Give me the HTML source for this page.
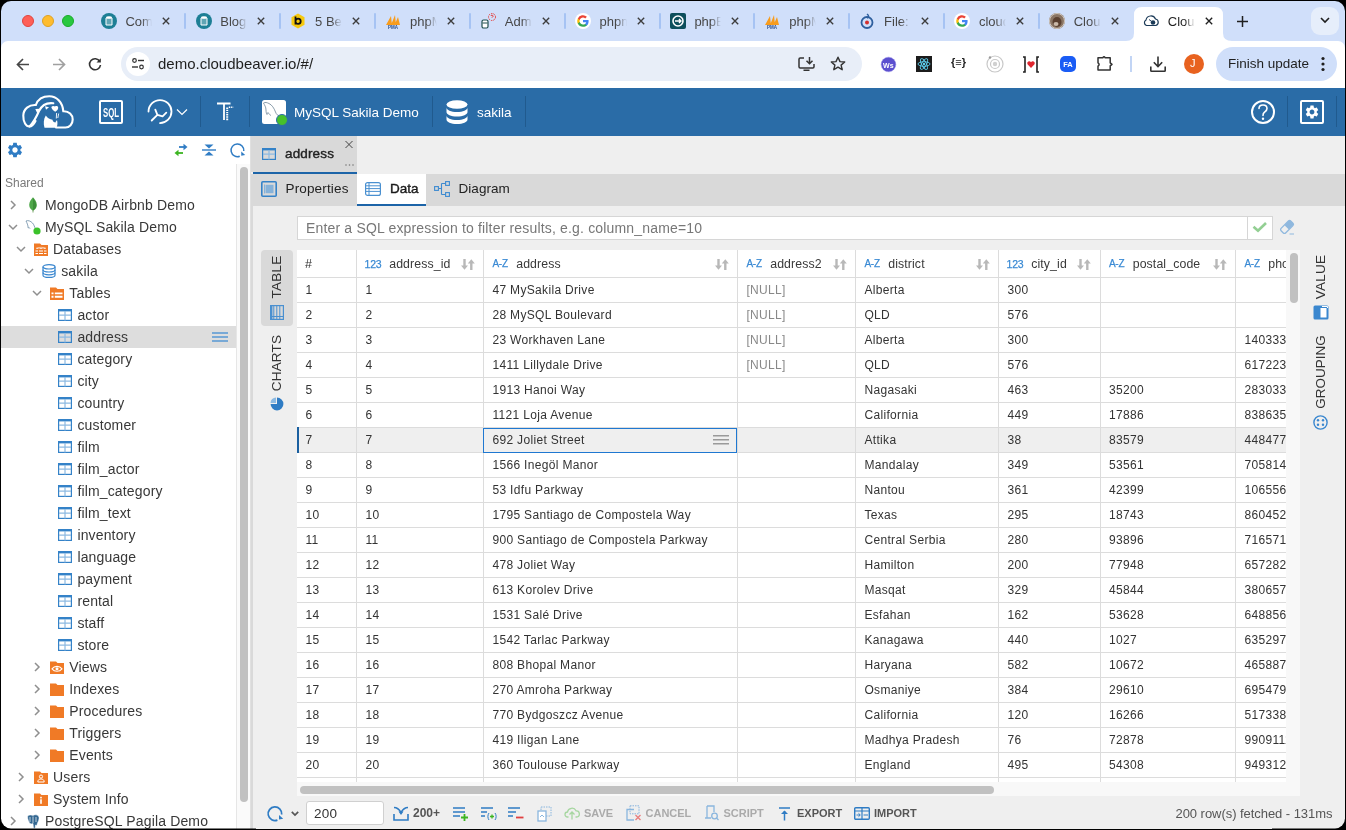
<!DOCTYPE html>
<html><head><meta charset="utf-8">
<style>
*{box-sizing:border-box;margin:0;padding:0}
html,body{width:1346px;height:830px;overflow:hidden;background:#000;font-family:"Liberation Sans",sans-serif}
#win{position:absolute;left:0;top:0;width:1346px;height:830px;overflow:hidden;background:#fff;will-change:transform;clip-path:inset(1px 1px 1.5px 1px round 10px)}
.a{position:absolute}
.t{position:absolute;white-space:nowrap;line-height:1.15}
svg.a{overflow:visible}
.tl{position:absolute;width:12px;height:12px;border-radius:50%}
.ctab{position:absolute;top:0;height:40px;width:90px}
.ctab .fav{position:absolute;left:0;top:13px;width:16px;height:16px}
.ctab .tt{position:absolute;left:24.8px;top:14px;font-size:13px;line-height:15px;color:#474747;width:27px;overflow:hidden;white-space:nowrap;-webkit-mask-image:linear-gradient(90deg,#000 62%,transparent 100%)}
.ctab .x{position:absolute;left:61.8px;top:17px;width:8px;height:8px;overflow:visible}
.csep{position:absolute;top:13px;width:2px;height:16px;background:#a6c3f3;border-radius:1px}
</style></head><body>
<div id="win">
<!-- ===== TAB STRIP ===== -->
<div class="a" style="left:0;top:0;width:1346px;height:48px;background:#d0dffa"></div>
<div class="tl" style="left:22px;top:15px;background:#fe5f57;border:0.5px solid #e0443e"></div>
<div class="tl" style="left:42px;top:15px;background:#febc2e;border:0.5px solid #dea123"></div>
<div class="tl" style="left:62px;top:15px;background:#28c840;border:0.5px solid #1aab29"></div>
<!-- tabs -->
<div class="ctab" style="left:100.7px">
 <svg class="fav" viewBox="0 0 16 16"><circle cx="8" cy="8" r="8" fill="#1d7f95"/><path d="M5 5h6v7H5z" fill="none" stroke="#fff" stroke-width="1"/><path d="M5 7h6M5 9h6M5 11h6" stroke="#fff" stroke-width=".6"/><ellipse cx="8" cy="4.5" rx="3" ry="1.3" fill="#fff"/></svg>
 <div class="tt">Compare</div><svg class="x" viewBox="0 0 10 10"><path d="M1 1L9 9M9 1L1 9" stroke="#3c3c3c" stroke-width="1.7"/></svg></div>
<div class="csep" style="left:184.4px"></div>
<div class="ctab" style="left:195.5px">
 <svg class="fav" viewBox="0 0 16 16"><circle cx="8" cy="8" r="8" fill="#1d7f95"/><path d="M5 5h6v7H5z" fill="none" stroke="#fff" stroke-width="1"/><path d="M5 7h6M5 9h6M5 11h6" stroke="#fff" stroke-width=".6"/><ellipse cx="8" cy="4.5" rx="3" ry="1.3" fill="#fff"/></svg>
 <div class="tt">Blog post</div><svg class="x" viewBox="0 0 10 10"><path d="M1 1L9 9M9 1L1 9" stroke="#3c3c3c" stroke-width="1.7"/></svg></div>
<div class="csep" style="left:279.2px"></div>
<div class="ctab" style="left:290.3px">
 <svg class="fav" viewBox="0 0 16 16"><path d="M8 0.5L14.5 4.2V11.8L8 15.5L1.5 11.8V4.2Z" fill="#f6c90e"/><path d="M5.5 3.5V11.5M5.5 8.3a2.6 2.6 0 1 0 5.2 0a2.6 2.6 0 1 0 -5.2 0" fill="none" stroke="#111" stroke-width="1.8"/></svg>
 <div class="tt">5 Best</div><svg class="x" viewBox="0 0 10 10"><path d="M1 1L9 9M9 1L1 9" stroke="#3c3c3c" stroke-width="1.7"/></svg></div>
<div class="csep" style="left:374.0px"></div>
<div class="ctab" style="left:385.2px">
 <svg class="fav" viewBox="0 0 16 16"><path d="M1 12L6 3L7 12ZM6 12L10 2L11 12ZM9.5 12L13 4L15 12Z" fill="#f89c1c"/><text x="8" y="15.5" font-size="4.5" font-weight="bold" fill="#2a4e8a" text-anchor="middle" font-family="Liberation Sans">PMA</text></svg>
 <div class="tt">phpMyAdmin</div><svg class="x" viewBox="0 0 10 10"><path d="M1 1L9 9M9 1L1 9" stroke="#3c3c3c" stroke-width="1.7"/></svg></div>
<div class="csep" style="left:468.9px"></div>
<div class="ctab" style="left:480.0px">
 <svg class="fav" viewBox="0 0 16 16"><rect x="2" y="7" width="6" height="8" rx="1.5" fill="#fff" stroke="#1f4f4f" stroke-width="1.2"/><path d="M2.5 10h5" stroke="#1f4f4f"/><circle cx="12" cy="4" r="3.5" fill="none" stroke="#e53935" stroke-width="1" stroke-dasharray="1.5 1"/><path d="M11 3a1 1 0 1 1 1.5 1l-.5.6" stroke="#e53935" fill="none" stroke-width="1"/></svg>
 <div class="tt">Admin</div><svg class="x" viewBox="0 0 10 10"><path d="M1 1L9 9M9 1L1 9" stroke="#3c3c3c" stroke-width="1.7"/></svg></div>
<div class="csep" style="left:563.7px"></div>
<div class="ctab" style="left:574.8px">
 <svg class="fav" viewBox="0 0 16 16"><circle cx="8" cy="8" r="8" fill="#fff"/><path d="M13.6 8.2c0-.4 0-.8-.1-1.2H8v2.3h3.2a2.8 2.8 0 0 1-1.2 1.8v1.5h1.9c1.1-1 1.7-2.5 1.7-4.4z" fill="#4285f4"/><path d="M8 13.8c1.6 0 2.9-.5 3.9-1.4l-1.9-1.5c-.5.4-1.2.6-2 .6-1.5 0-2.8-1-3.3-2.4H2.8v1.5A5.8 5.8 0 0 0 8 13.8z" fill="#34a853"/><path d="M4.7 9.1a3.500 3.500 0 0 1 0-2.2V5.4H2.8a5.800 5.800 0 0 0 0 5.200z" fill="#fbbc05"/><path d="M8 4.500c.9 0 1.6.3 2.200.9l1.700-1.700A5.800 5.800 0 0 0 2.800 5.400l1.900 1.500C5.200 5.500 6.500 4.500 8 4.500z" fill="#ea4335"/></svg>
 <div class="tt">phpmyadmin</div><svg class="x" viewBox="0 0 10 10"><path d="M1 1L9 9M9 1L1 9" stroke="#3c3c3c" stroke-width="1.7"/></svg></div>
<div class="csep" style="left:658.5px"></div>
<div class="ctab" style="left:669.6px">
 <svg class="fav" viewBox="0 0 16 16"><rect width="16" height="16" rx="2" fill="#0d4f5c"/><circle cx="8" cy="8" r="5" fill="none" stroke="#fff" stroke-width="1.6"/><path d="M5 8h6M9 6l2 2-2 2" stroke="#fff" stroke-width="1.4" fill="none"/></svg>
 <div class="tt">phpBB</div><svg class="x" viewBox="0 0 10 10"><path d="M1 1L9 9M9 1L1 9" stroke="#3c3c3c" stroke-width="1.7"/></svg></div>
<div class="csep" style="left:753.3px"></div>
<div class="ctab" style="left:764.4px">
 <svg class="fav" viewBox="0 0 16 16"><path d="M1 12L6 3L7 12ZM6 12L10 2L11 12ZM9.5 12L13 4L15 12Z" fill="#f89c1c"/><text x="8" y="15.5" font-size="4.5" font-weight="bold" fill="#2a4e8a" text-anchor="middle" font-family="Liberation Sans">PMA</text></svg>
 <div class="tt">phpMyAdmin</div><svg class="x" viewBox="0 0 10 10"><path d="M1 1L9 9M9 1L1 9" stroke="#3c3c3c" stroke-width="1.7"/></svg></div>
<div class="csep" style="left:848.1px"></div>
<div class="ctab" style="left:859.3px">
 <svg class="fav" viewBox="0 0 16 16"><circle cx="8" cy="9.5" r="5.5" fill="none" stroke="#2e5f9e" stroke-width="1.8"/><circle cx="8" cy="9.5" r="2" fill="#d32f2f"/><path d="M8 1c2 1.5 2 3 0 4" stroke="#2e5f9e" stroke-width="1.5" fill="none"/></svg>
 <div class="tt">File:</div><svg class="x" viewBox="0 0 10 10"><path d="M1 1L9 9M9 1L1 9" stroke="#3c3c3c" stroke-width="1.7"/></svg></div>
<div class="csep" style="left:943.0px"></div>
<div class="ctab" style="left:954.1px">
 <svg class="fav" viewBox="0 0 16 16"><circle cx="8" cy="8" r="8" fill="#fff"/><path d="M13.6 8.2c0-.4 0-.8-.1-1.2H8v2.3h3.2a2.8 2.8 0 0 1-1.2 1.8v1.5h1.9c1.1-1 1.7-2.5 1.7-4.4z" fill="#4285f4"/><path d="M8 13.8c1.6 0 2.9-.5 3.9-1.4l-1.9-1.5c-.5.4-1.2.6-2 .6-1.5 0-2.8-1-3.3-2.4H2.8v1.5A5.8 5.8 0 0 0 8 13.8z" fill="#34a853"/><path d="M4.7 9.1a3.500 3.500 0 0 1 0-2.2V5.4H2.8a5.800 5.800 0 0 0 0 5.200z" fill="#fbbc05"/><path d="M8 4.500c.9 0 1.6.3 2.200.9l1.700-1.700A5.800 5.800 0 0 0 2.800 5.400l1.900 1.500C5.200 5.500 6.500 4.500 8 4.500z" fill="#ea4335"/></svg>
 <div class="tt">cloudbeaver</div><svg class="x" viewBox="0 0 10 10"><path d="M1 1L9 9M9 1L1 9" stroke="#3c3c3c" stroke-width="1.7"/></svg></div>
<div class="csep" style="left:1037.8px"></div>
<div class="ctab" style="left:1048.9px">
 <svg class="fav" viewBox="0 0 16 16"><circle cx="8" cy="8" r="8" fill="#8a7564"/><circle cx="8" cy="8" r="7.5" fill="none" stroke="#cfc6bd" stroke-width="1"/><ellipse cx="8" cy="9" rx="4.5" ry="5" fill="#5a4030"/><ellipse cx="7" cy="11" rx="2.5" ry="2" fill="#c9b8a8"/></svg>
 <div class="tt">CloudBeaver</div><svg class="x" viewBox="0 0 10 10"><path d="M1 1L9 9M9 1L1 9" stroke="#3c3c3c" stroke-width="1.7"/></svg></div>
<!-- active tab -->
<svg class="a" style="left:1126px;top:7px" width="106" height="34" viewBox="0 0 106 34"><path d="M0 34Q8 34 8 26V8Q8 0 16 0H89Q97 0 97 8V26Q97 34 106 34Z" fill="#fff"/></svg>
<div class="ctab" style="left:1143px">
 <svg class="fav" viewBox="0 0 16 16"><path d="M3.5 12.5a3 3 0 0 1-.5-5.5a5 5 0 0 1 9.5-1a3.3 3.3 0 0 1 0 6.5z" fill="none" stroke="#1b3a57" stroke-width="1.2"/><circle cx="10" cy="9.5" r="2.3" fill="#1b3a57"/><path d="M6 6.5l2 1.5" stroke="#1b3a57"/></svg>
 <div class="tt" style="color:#1f1f1f">CloudBeaver</div><svg class="x" viewBox="0 0 10 10"><path d="M1 1L9 9M9 1L1 9" stroke="#1f1f1f" stroke-width="1.7"/></svg></div>
<svg class="a" style="left:1237px;top:16px" width="11" height="11" viewBox="0 0 11 11"><path d="M5.5 0V11M0 5.5H11" stroke="#1f1f1f" stroke-width="1.5"/></svg>
<div class="a" style="left:1311px;top:7px;width:28px;height:28px;border-radius:9px;background:#e6eefb"></div>
<svg class="a" style="left:1320px;top:17px" width="10" height="7" viewBox="0 0 10 7"><path d="M1 1L5 5L9 1" stroke="#1f1f1f" stroke-width="1.6" fill="none"/></svg>

<!-- ===== TOOLBAR ===== -->
<div class="a" style="left:1px;top:41px;width:1344px;height:47px;background:#fff;border-radius:7px 7px 0 0"></div>
<svg class="a" style="left:16px;top:58px" width="14" height="13" viewBox="0 0 14 13"><path d="M13 6.5H2M7 1L1.5 6.5L7 12" stroke="#474747" stroke-width="1.7" fill="none"/></svg>
<svg class="a" style="left:52px;top:58px" width="14" height="13" viewBox="0 0 14 13"><path d="M1 6.5H12M7 1L12.5 6.5L7 12" stroke="#a0a0a0" stroke-width="1.7" fill="none"/></svg>
<svg class="a" style="left:88px;top:57px" width="14" height="14" viewBox="0 0 14 14"><path d="M11.8 4.5A5.5 5.5 0 1 0 12.5 8" stroke="#333" stroke-width="1.6" fill="none"/><path d="M12.8 1.2V5.5H8.5Z" fill="#333"/></svg>
<div class="a" style="left:121px;top:47px;width:741px;height:34px;border-radius:17px;background:#e8eef8"></div>
<div class="a" style="left:126px;top:52px;width:24px;height:24px;border-radius:12px;background:#fff"></div>
<svg class="a" style="left:131px;top:58px" width="14" height="12" viewBox="0 0 14 12"><circle cx="3.5" cy="2.5" r="1.8" fill="none" stroke="#333" stroke-width="1.2"/><path d="M7 2.5H13" stroke="#333" stroke-width="1.4"/><circle cx="10.5" cy="9" r="1.8" fill="none" stroke="#333" stroke-width="1.2"/><path d="M1 9H7" stroke="#333" stroke-width="1.4"/></svg>
<div class="t" style="left:158px;top:55px;font-size:15px;color:#1f1f1f">demo.cloudbeaver.io/#/</div>
<svg class="a" style="left:798px;top:56px" width="17" height="16" viewBox="0 0 17 16"><path d="M6 2H2.2A1.2 1.2 0 0 0 1 3.2V10.8A1.2 1.2 0 0 0 2.2 12H14.8A1.2 1.2 0 0 0 16 10.8V8" stroke="#333" stroke-width="1.5" fill="none"/><path d="M11.5 1V7.5M8.5 4.8L11.5 7.8L14.5 4.8" stroke="#333" stroke-width="1.5" fill="none"/><path d="M5.5 13.5H11.5V15H5.5Z" fill="#333"/></svg>
<svg class="a" style="left:830px;top:56px" width="16" height="15" viewBox="0 0 16 15"><path d="M8 1.2L10 5.6L14.7 6L11.1 9.1L12.2 13.7L8 11.2L3.8 13.7L4.9 9.1L1.3 6L6 5.6Z" stroke="#333" stroke-width="1.4" fill="none" stroke-linejoin="round"/></svg>
<!-- extension icons -->
<svg class="a" style="left:881px;top:57px" width="15" height="15" viewBox="0 0 15 15"><circle cx="7.5" cy="7.5" r="7.3" fill="#5b4fcf" stroke="#8f86e6" stroke-width=".6" stroke-dasharray="1 .6"/><text x="7.3" y="10.5" font-size="7" font-weight="bold" fill="#fff" text-anchor="middle" font-family="Liberation Sans">Ws</text></svg>
<svg class="a" style="left:916px;top:56px" width="16" height="16" viewBox="0 0 16 16"><rect width="16" height="16" fill="#1c1c1c"/><g fill="none" stroke="#5ed3f3" stroke-width=".9"><ellipse cx="8" cy="8" rx="6" ry="2.3"/><ellipse cx="8" cy="8" rx="6" ry="2.3" transform="rotate(60 8 8)"/><ellipse cx="8" cy="8" rx="6" ry="2.3" transform="rotate(120 8 8)"/></g><circle cx="8" cy="8" r="1.2" fill="#5ed3f3"/></svg>
<div class="t" style="left:951px;top:56px;font-size:11px;font-weight:bold;color:#222">{≡}</div>
<svg class="a" style="left:986px;top:55px" width="18" height="18" viewBox="0 0 18 18"><circle cx="9" cy="9" r="8" fill="none" stroke="#c8c8c8" stroke-width="1.2"/><circle cx="9" cy="9" r="4.5" fill="none" stroke="#c8c8c8" stroke-width="1.2"/><circle cx="9" cy="9" r="2.2" fill="#d0d0d0"/><circle cx="4" cy="2.5" r="1.2" fill="#999"/></svg>
<svg class="a" style="left:1022px;top:56px" width="18" height="17" viewBox="0 0 18 17"><path d="M1 1H3V16H1" stroke="#222" stroke-width="1.6" fill="none"/><path d="M17 1H15V16H17" stroke="#222" stroke-width="1.6" fill="none"/><path d="M9 12L5.5 8.3a2 2 0 0 1 3.5-2a2 2 0 0 1 3.5 2Z" fill="#e0262f"/></svg>
<svg class="a" style="left:1060px;top:56px" width="16" height="16" viewBox="0 0 16 16"><rect width="16" height="16" rx="5" fill="#1a5cf5"/><text x="8" y="11" font-size="7.5" font-weight="bold" fill="#fff" text-anchor="middle" font-family="Liberation Sans">FA</text></svg>
<svg class="a" style="left:1097px;top:55px" width="17" height="16" viewBox="0 0 17 16"><path d="M1 2.8H5.8Q7 0.6 8.2 2.8H13.2V7.8L15 9.3L13.2 10.8V15H1V11.2Q3.2 9.5 1 7.8Z" stroke="#333" stroke-width="1.5" fill="none" stroke-linejoin="round"/></svg>
<div class="a" style="left:1130px;top:56px;width:1.5px;height:16px;background:#c2d5f5"></div>
<svg class="a" style="left:1150px;top:56px" width="16" height="16" viewBox="0 0 16 16"><path d="M8 0.5V10.5M3.8 6.3L8 10.5L12.2 6.3" stroke="#333" stroke-width="1.6" fill="none"/><path d="M0.8 10.5V14.5Q0.8 15.2 1.5 15.2H14.5Q15.2 15.2 15.2 14.5V10.5" stroke="#333" stroke-width="1.6" fill="none"/></svg>
<div class="a" style="left:1184px;top:54px;width:20px;height:20px;border-radius:10px;background:#e8621f"></div>
<div class="t" style="left:1190px;top:57px;font-size:11px;color:#fff">J</div>
<div class="a" style="left:1216px;top:47px;width:121px;height:34px;border-radius:17px;background:#d0dffa"></div>
<div class="t" style="left:1228px;top:56px;font-size:13.5px;color:#1f1f1f">Finish update</div>
<svg class="a" style="left:1321px;top:56px" width="4" height="16" viewBox="0 0 4 16"><circle cx="2" cy="2.5" r="1.6" fill="#1f1f1f"/><circle cx="2" cy="8" r="1.6" fill="#1f1f1f"/><circle cx="2" cy="13.5" r="1.6" fill="#1f1f1f"/></svg>
<!-- ===== APP HEADER ===== -->
<div class="a" style="left:0;top:88px;width:1346px;height:48px;background:#2a6ca7"></div>
<!-- logo -->
<svg class="a" style="left:18px;top:92px" width="60" height="40" viewBox="0 0 60 40">
 <g fill="none" stroke="#fff" stroke-width="2.1" stroke-linecap="round" stroke-linejoin="round">
  <path d="M17.8 13C11 12.5 5.5 17 5.3 23.5C5.1 30 8 34.5 11.5 34.5C14 34.5 16 32 17.5 29"/>
  <path d="M17.8 13C20 7 25.5 4.3 31.3 4.3C38.5 4.3 44.5 10 45.3 19.3C51 19 54.7 23 54.7 27.5C54.7 32 51.5 35.5 47.5 35.5H38"/>
  <path d="M11.5 34.5C15 31 18 26 21 19C24 13 28.5 10.5 35.3 11.3"/>
 </g>
 <path d="M26.5 35.7C25.3 32 25.5 27 27.8 23.6C29.5 26 32 27.5 34.5 27.8C34.8 29.5 36 30.5 37.5 30.5C38 29 38.5 28.5 39 28C39.8 31 39.5 33.5 38.5 35.7Z" fill="#fff"/>
 <path d="M27 14.2L31 15.2L28 17.8Z" fill="#fff"/>
 <path d="M33.3 15C34.5 13.5 36.5 14.3 37 14.5C38 13.8 40.3 13.8 40.2 16C40 18 38 19.5 37.2 19.8C36 19 33.5 17.3 33.3 15Z" fill="#fff"/>
 <path d="M17.3 17L22 16.8L19.8 22.5Z" fill="#fff"/>
 <path d="M38.6 21L38.3 26.5M40.7 21.5L39.8 26" fill="none" stroke="#fff" stroke-width=".9"/>
</svg>
<!-- SQL -->
<div class="a" style="left:99px;top:100px;width:24px;height:24px;border:2px solid #fff;border-radius:2px"></div>
<div class="t" style="left:96px;top:104.5px;width:30px;text-align:center;font-size:13px;font-weight:bold;color:#fff;transform:scaleX(0.6);letter-spacing:0px;line-height:15px">SQL</div>
<div class="a" style="left:135px;top:96px;width:1px;height:31px;background:#205a8e"></div>
<!-- tools -->
<svg class="a" style="left:146px;top:98px" width="28" height="28" viewBox="0 0 28 28">
 <path d="M2.5 13.6A11.5 11.5 0 1 1 14 25.1" fill="none" stroke="#fff" stroke-width="1.8" stroke-linecap="round"/>
 <path d="M5.7 22.5L11.4 16.8M11.4 16.8L9.3 11.6M11.4 16.8L16.6 18.3L20.3 14.7" fill="none" stroke="#fff" stroke-width="1.8" stroke-linecap="round" stroke-linejoin="round"/>
</svg>
<svg class="a" style="left:176px;top:108px" width="12" height="8" viewBox="0 0 12 8"><path d="M1 1.5L6 6.5L11 1.5" fill="none" stroke="#fff" stroke-width="1.2"/></svg>
<div class="a" style="left:200px;top:96px;width:1px;height:31px;background:#205a8e"></div>
<!-- T -->
<svg class="a" style="left:216px;top:102px" width="18" height="20" viewBox="0 0 18 20">
 <path d="M1 1.5H14.5M8 1.5V18" stroke="#fff" stroke-width="1.8"/>
 <path d="M11.2 5.5V19" stroke="#fff" stroke-width="2" stroke-dasharray="1.4 0.8"/>
 <path d="M12.8 5.2H17.2" stroke="#fff" stroke-width="1.6" stroke-dasharray="1.2 0.7"/>
</svg>
<div class="a" style="left:249px;top:96px;width:1px;height:31px;background:#205a8e"></div>
<!-- connection -->
<div class="a" style="left:262px;top:100px;width:24px;height:24px;border-radius:2.5px;background:#fff"></div>
<svg class="a" style="left:262px;top:100px" width="24" height="24" viewBox="0 0 24 24">
 <path d="M1.5 3C3 2 5 2.5 7 3.5C10 5 12 8 13.5 12C14.5 14.5 15.5 15.5 17 15.5" fill="none" stroke="#6f8597" stroke-width=".8"/>
 <path d="M1.5 3C2.5 5 4 7 4 10C4 12 4.5 14 5 14.5C5.5 13.5 6 13 6 12.5C7 14 8 15 9 15.5" fill="none" stroke="#6f8597" stroke-width=".8"/>
</svg>
<div class="a" style="left:276px;top:114px;width:12px;height:12px;border-radius:50%;background:#46c12a;border:1.6px solid #2a6ca7"></div>
<div class="t" style="left:294px;top:104px;font-size:13.5px;color:#fff;line-height:17px">MySQL Sakila Demo</div>
<div class="a" style="left:432px;top:96px;width:1px;height:31px;background:#205a8e"></div>
<svg class="a" style="left:446px;top:100px" width="22" height="24" viewBox="0 0 22 24">
 <ellipse cx="11" cy="4.5" rx="10.5" ry="4.3" fill="#fff"/>
 <path d="M0.5 7.5C0.5 10 5 12 11 12C17 12 21.5 10 21.5 7.5V12C21.5 14.5 17 16.5 11 16.5C5 16.5 0.5 14.5 0.5 12Z" fill="#fff"/>
 <path d="M0.5 15.5C0.5 18 5 20 11 20C17 20 21.5 18 21.5 15.5V19.5C21.5 22 17 24 11 24C5 24 0.5 22 0.5 19.5Z" fill="#fff"/>
</svg>
<div class="t" style="left:477px;top:104px;font-size:13.5px;color:#fff;line-height:17px">sakila</div>
<div class="a" style="left:525px;top:96px;width:1px;height:31px;background:#205a8e"></div>
<!-- right -->
<div class="a" style="left:1251px;top:100px;width:24px;height:24px;border-radius:50%;border:2px solid #fff"></div>
<svg class="a" style="left:1257px;top:104px" width="12" height="17" viewBox="0 0 12 17"><path d="M2 4.5C2 2.3 3.8 1 6 1C8.2 1 10 2.4 10 4.5C10 6.5 8.5 7.3 7.3 8.3C6.3 9.1 6 10 6 11.5" fill="none" stroke="#fff" stroke-width="1.6" stroke-linecap="round"/><circle cx="6" cy="14.8" r="1.2" fill="#fff"/></svg>
<div class="a" style="left:1287px;top:96px;width:1px;height:31px;background:#205a8e"></div>
<div class="a" style="left:1300px;top:100px;width:24px;height:24px;border:2px solid #fff;border-radius:2px"></div>
<svg class="a" style="left:1304px;top:104px" width="16" height="16" viewBox="0 0 24 24"><path fill="#fff" d="M19.14 12.94c.04-.3.06-.61.06-.94 0-.32-.02-.64-.07-.94l2.03-1.58c.18-.14.23-.41.12-.61l-1.92-3.32c-.12-.22-.37-.29-.59-.22l-2.39.96c-.5-.38-1.03-.7-1.62-.94l-.36-2.54c-.04-.24-.24-.41-.48-.41h-3.84c-.24 0-.43.17-.47.41l-.36 2.54c-.59.24-1.13.57-1.62.94l-2.39-.96c-.22-.08-.47 0-.59.22L2.74 8.87c-.12.21-.08.47.12.61l2.03 1.58c-.05.3-.09.63-.09.94s.02.64.07.94l-2.03 1.58c-.18.14-.23.41-.12.61l1.92 3.32c.12.22.37.29.59.22l2.39-.96c.5.38 1.03.7 1.62.94l.36 2.54c.05.24.24.41.48.41h3.84c.24 0 .44-.17.47-.41l.36-2.54c.59-.24 1.13-.56 1.62-.94l2.39.96c.22.08.47 0 .59-.22l1.92-3.32c.12-.22.07-.47-.12-.61l-2.01-1.58zM12 15.6c-1.98 0-3.6-1.62-3.6-3.6s1.62-3.6 3.6-3.6 3.6 1.62 3.6 3.6-1.62 3.6-3.6 3.6z"/></svg>
<div class="a" style="left:1336px;top:96px;width:1px;height:31px;background:#205a8e"></div>
<!-- ===== SIDEBAR ===== -->
<div class="a" style="left:0;top:136px;width:251px;height:694px;background:#fff"></div>
<svg class="a" style="left:6px;top:141px" width="18" height="18" viewBox="0 0 24 24"><path fill="#2f7cc4" d="M19.14 12.94c.04-.3.06-.61.06-.94 0-.32-.02-.64-.07-.94l2.03-1.58c.18-.14.23-.41.12-.61l-1.92-3.32c-.12-.22-.37-.29-.59-.22l-2.39.96c-.5-.38-1.03-.7-1.62-.94l-.36-2.54c-.04-.24-.24-.41-.48-.41h-3.840c-.24 0-.43.17-.47.41l-.36 2.54c-.59.24-1.13.57-1.62.94l-2.39-.96c-.22-.08-.47 0-.59.22L2.74 8.870c-.12.21-.08.47.12.61l2.03 1.58c-.05.3-.09.63-.09.94s.02.64.07.94l-2.03 1.58c-.18.14-.23.41-.12.61l1.92 3.32c.12.22.37.29.59.22l2.39-.96c.5.38 1.03.7 1.62.94l.36 2.54c.05.24.24.41.48.41h3.84c.24 0 .44-.17.47-.41l.36-2.54c.59-.24 1.13-.56 1.62-.94l2.39.96c.22.08.47 0 .59-.22l1.92-3.32c.12-.22.07-.47-.12-.61l-2.010-1.58zM12 15.600c-1.98 0-3.6-1.62-3.6-3.6s1.62-3.6 3.6-3.6 3.6 1.62 3.6 3.6-1.62 3.6-3.6 3.6z"/></svg>
<svg class="a" style="left:174px;top:143px" width="14" height="14" viewBox="0 0 14 14"><path d="M5 4H10.5" stroke="#2f7cc4" stroke-width="1.8"/><path d="M9.5 0.8L13.5 4L9.5 7.2Z" fill="#2f7cc4"/><path d="M9 10H3.5" stroke="#3cb521" stroke-width="1.8"/><path d="M4.5 6.8L0.5 10L4.5 13.2Z" fill="#3cb521"/></svg>
<svg class="a" style="left:202px;top:144px" width="14" height="12" viewBox="0 0 14 12"><path d="M2.5 0.5H11.5L7 4.5Z" fill="#2f7cc4"/><path d="M0 6H14" stroke="#2f7cc4" stroke-width="1.4"/><path d="M2.5 11.5H11.5L7 7.5Z" fill="#2f7cc4"/></svg>
<svg class="a" style="left:230px;top:143px" width="15" height="15" viewBox="0 0 16 16"><path d="M10.4 14.1A6.8 6.8 0 1 1 14.7 8.5" fill="none" stroke="#2f7cc4" stroke-width="1.6"/><path d="M12 9V13.6L16.2 12.8Z" fill="#2f7cc4"/></svg>
<div class="t" style="left:5px;top:176px;font-size:12px;line-height:14px;color:#7a7a7a">Shared</div>
<div class="a" style="left:1px;top:326px;width:235px;height:22px;background:#dddddd"></div>
<svg class="a" style="left:9.5px;top:200px" width="6" height="10" viewBox="0 0 6 10"><path d="M1 1L5 5L1 9" fill="none" stroke="#8f8f8f" stroke-width="1.5"/></svg>
<svg class="a" style="left:28.0px;top:197.0px" width="10" height="16" viewBox="0 0 10 16"><path d="M5 0.3C7 2.5 8.8 5 8.8 8C8.8 10.8 7 12.5 5 13.8C3 12.5 1.2 10.8 1.2 8C1.2 5 3 2.5 5 0.3Z" fill="#4fa84a"/><path d="M5 1C6.5 3.5 8.3 5.5 8.3 8.2C8.3 10.8 6.8 12.3 5 13.6Z" fill="#3d8f3a"/><path d="M5 13V15.5" stroke="#6b9c5a" stroke-width=".9"/></svg>
<div class="t" style="left:45.0px;top:194px;font-size:14px;line-height:22px;color:#383838;letter-spacing:0.15px">MongoDB Airbnb Demo</div>
<svg class="a" style="left:7.5px;top:224px" width="10" height="6" viewBox="0 0 10 6"><path d="M1 1L5 5L9 1" fill="none" stroke="#8f8f8f" stroke-width="1.5"/></svg>
<svg class="a" style="left:25.0px;top:219.0px" width="16" height="16" viewBox="0 0 16 16"><path d="M1 2C3 1 5.5 2 7.5 4C9 5.5 9.5 8 10.5 10" fill="none" stroke="#6a8aa5" stroke-width=".8"/><path d="M1 2C2 4 3 6 3.2 9C4 8.5 4.5 8.5 5 9.5" fill="none" stroke="#6a8aa5" stroke-width=".8"/><circle cx="12" cy="12" r="3.6" fill="#3bc22a"/></svg>
<div class="t" style="left:45.0px;top:216px;font-size:14px;line-height:22px;color:#383838;letter-spacing:0.15px">MySQL Sakila Demo</div>
<svg class="a" style="left:15.7px;top:246px" width="10" height="6" viewBox="0 0 10 6"><path d="M1 1L5 5L9 1" fill="none" stroke="#8f8f8f" stroke-width="1.5"/></svg>
<svg class="a" style="left:34.0px;top:242.5px" width="14" height="13" viewBox="0 0 14 13"><path d="M0 0.5H6L7.5 2H14V13H0Z" fill="#f07a26"/><path d="M2.5 5.5H4.5M5.5 5.5H8.5M9.5 5.5H11.5" stroke="#fff" stroke-width="1" opacity=".75"/><path d="M1.5 8H4M5 8H9M10 8H12.5M1.5 10.5H4M5 10.5H9M10 10.5H12.5" stroke="#fff" stroke-width="1.2"/><path d="M2 5.3C4 4 10 4 12 5.3" fill="none" stroke="#fff" stroke-width=".8" opacity=".7"/></svg>
<div class="t" style="left:53.1px;top:238px;font-size:14px;line-height:22px;color:#383838;letter-spacing:0.15px">Databases</div>
<svg class="a" style="left:23.9px;top:268px" width="10" height="6" viewBox="0 0 10 6"><path d="M1 1L5 5L9 1" fill="none" stroke="#8f8f8f" stroke-width="1.5"/></svg>
<svg class="a" style="left:42.0px;top:264.0px" width="14" height="14" viewBox="0 0 14 14"><g fill="none" stroke="#3a87cf" stroke-width="1.2"><ellipse cx="7" cy="2.8" rx="6" ry="2.2"/><path d="M1 2.8V11.2C1 12.4 3.7 13.4 7 13.4C10.3 13.4 13 12.4 13 11.2V2.8"/><path d="M1 5.8C1 7 3.7 8 7 8C10.3 8 13 7 13 5.8M1 8.6C1 9.8 3.7 10.8 7 10.8C10.3 10.8 13 9.8 13 8.6"/></g></svg>
<div class="t" style="left:61.2px;top:260px;font-size:14px;line-height:22px;color:#383838;letter-spacing:0.15px">sakila</div>
<svg class="a" style="left:32.1px;top:290px" width="10" height="6" viewBox="0 0 10 6"><path d="M1 1L5 5L9 1" fill="none" stroke="#8f8f8f" stroke-width="1.5"/></svg>
<svg class="a" style="left:50.0px;top:286.5px" width="14" height="13" viewBox="0 0 14 13"><path d="M0 0.5H6L7.5 2H14V13H0Z" fill="#f07a26"/><path d="M1.5 5.5H3.5V7.3H1.5ZM4.8 5.5H12.5V7.3H4.8ZM1.5 8.8H3.5V10.8H1.5ZM4.8 8.8H12.5V10.8H4.8Z" fill="#fff"/></svg>
<div class="t" style="left:69.3px;top:282px;font-size:14px;line-height:22px;color:#383838;letter-spacing:0.15px">Tables</div>
<svg class="a" style="left:58.0px;top:309.0px" width="14" height="12" viewBox="0 0 14 12"><rect x="0.6" y="0.6" width="12.8" height="10.8" fill="none" stroke="#3482c8" stroke-width="1.2"/><rect x="0" y="0" width="14" height="2.4" fill="#3482c8"/><path d="M1 6.2H13M7 2V11.5" stroke="#8dbae2" stroke-width="1.2"/></svg>
<div class="t" style="left:77.4px;top:304px;font-size:14px;line-height:22px;color:#383838;letter-spacing:0.15px">actor</div>
<svg class="a" style="left:58.0px;top:331.0px" width="14" height="12" viewBox="0 0 14 12"><rect x="0.6" y="0.6" width="12.8" height="10.8" fill="none" stroke="#3482c8" stroke-width="1.2"/><rect x="0" y="0" width="14" height="2.4" fill="#3482c8"/><path d="M1 6.2H13M7 2V11.5" stroke="#8dbae2" stroke-width="1.2"/></svg>
<div class="t" style="left:77.4px;top:326px;font-size:14px;line-height:22px;color:#383838;letter-spacing:0.15px">address</div>
<svg class="a" style="left:58.0px;top:353.0px" width="14" height="12" viewBox="0 0 14 12"><rect x="0.6" y="0.6" width="12.8" height="10.8" fill="none" stroke="#3482c8" stroke-width="1.2"/><rect x="0" y="0" width="14" height="2.4" fill="#3482c8"/><path d="M1 6.2H13M7 2V11.5" stroke="#8dbae2" stroke-width="1.2"/></svg>
<div class="t" style="left:77.4px;top:348px;font-size:14px;line-height:22px;color:#383838;letter-spacing:0.15px">category</div>
<svg class="a" style="left:58.0px;top:375.0px" width="14" height="12" viewBox="0 0 14 12"><rect x="0.6" y="0.6" width="12.8" height="10.8" fill="none" stroke="#3482c8" stroke-width="1.2"/><rect x="0" y="0" width="14" height="2.4" fill="#3482c8"/><path d="M1 6.2H13M7 2V11.5" stroke="#8dbae2" stroke-width="1.2"/></svg>
<div class="t" style="left:77.4px;top:370px;font-size:14px;line-height:22px;color:#383838;letter-spacing:0.15px">city</div>
<svg class="a" style="left:58.0px;top:397.0px" width="14" height="12" viewBox="0 0 14 12"><rect x="0.6" y="0.6" width="12.8" height="10.8" fill="none" stroke="#3482c8" stroke-width="1.2"/><rect x="0" y="0" width="14" height="2.4" fill="#3482c8"/><path d="M1 6.2H13M7 2V11.5" stroke="#8dbae2" stroke-width="1.2"/></svg>
<div class="t" style="left:77.4px;top:392px;font-size:14px;line-height:22px;color:#383838;letter-spacing:0.15px">country</div>
<svg class="a" style="left:58.0px;top:419.0px" width="14" height="12" viewBox="0 0 14 12"><rect x="0.6" y="0.6" width="12.8" height="10.8" fill="none" stroke="#3482c8" stroke-width="1.2"/><rect x="0" y="0" width="14" height="2.4" fill="#3482c8"/><path d="M1 6.2H13M7 2V11.5" stroke="#8dbae2" stroke-width="1.2"/></svg>
<div class="t" style="left:77.4px;top:414px;font-size:14px;line-height:22px;color:#383838;letter-spacing:0.15px">customer</div>
<svg class="a" style="left:58.0px;top:441.0px" width="14" height="12" viewBox="0 0 14 12"><rect x="0.6" y="0.6" width="12.8" height="10.8" fill="none" stroke="#3482c8" stroke-width="1.2"/><rect x="0" y="0" width="14" height="2.4" fill="#3482c8"/><path d="M1 6.2H13M7 2V11.5" stroke="#8dbae2" stroke-width="1.2"/></svg>
<div class="t" style="left:77.4px;top:436px;font-size:14px;line-height:22px;color:#383838;letter-spacing:0.15px">film</div>
<svg class="a" style="left:58.0px;top:463.0px" width="14" height="12" viewBox="0 0 14 12"><rect x="0.6" y="0.6" width="12.8" height="10.8" fill="none" stroke="#3482c8" stroke-width="1.2"/><rect x="0" y="0" width="14" height="2.4" fill="#3482c8"/><path d="M1 6.2H13M7 2V11.5" stroke="#8dbae2" stroke-width="1.2"/></svg>
<div class="t" style="left:77.4px;top:458px;font-size:14px;line-height:22px;color:#383838;letter-spacing:0.15px">film_actor</div>
<svg class="a" style="left:58.0px;top:485.0px" width="14" height="12" viewBox="0 0 14 12"><rect x="0.6" y="0.6" width="12.8" height="10.8" fill="none" stroke="#3482c8" stroke-width="1.2"/><rect x="0" y="0" width="14" height="2.4" fill="#3482c8"/><path d="M1 6.2H13M7 2V11.5" stroke="#8dbae2" stroke-width="1.2"/></svg>
<div class="t" style="left:77.4px;top:480px;font-size:14px;line-height:22px;color:#383838;letter-spacing:0.15px">film_category</div>
<svg class="a" style="left:58.0px;top:507.0px" width="14" height="12" viewBox="0 0 14 12"><rect x="0.6" y="0.6" width="12.8" height="10.8" fill="none" stroke="#3482c8" stroke-width="1.2"/><rect x="0" y="0" width="14" height="2.4" fill="#3482c8"/><path d="M1 6.2H13M7 2V11.5" stroke="#8dbae2" stroke-width="1.2"/></svg>
<div class="t" style="left:77.4px;top:502px;font-size:14px;line-height:22px;color:#383838;letter-spacing:0.15px">film_text</div>
<svg class="a" style="left:58.0px;top:529.0px" width="14" height="12" viewBox="0 0 14 12"><rect x="0.6" y="0.6" width="12.8" height="10.8" fill="none" stroke="#3482c8" stroke-width="1.2"/><rect x="0" y="0" width="14" height="2.4" fill="#3482c8"/><path d="M1 6.2H13M7 2V11.5" stroke="#8dbae2" stroke-width="1.2"/></svg>
<div class="t" style="left:77.4px;top:524px;font-size:14px;line-height:22px;color:#383838;letter-spacing:0.15px">inventory</div>
<svg class="a" style="left:58.0px;top:551.0px" width="14" height="12" viewBox="0 0 14 12"><rect x="0.6" y="0.6" width="12.8" height="10.8" fill="none" stroke="#3482c8" stroke-width="1.2"/><rect x="0" y="0" width="14" height="2.4" fill="#3482c8"/><path d="M1 6.2H13M7 2V11.5" stroke="#8dbae2" stroke-width="1.2"/></svg>
<div class="t" style="left:77.4px;top:546px;font-size:14px;line-height:22px;color:#383838;letter-spacing:0.15px">language</div>
<svg class="a" style="left:58.0px;top:573.0px" width="14" height="12" viewBox="0 0 14 12"><rect x="0.6" y="0.6" width="12.8" height="10.8" fill="none" stroke="#3482c8" stroke-width="1.2"/><rect x="0" y="0" width="14" height="2.4" fill="#3482c8"/><path d="M1 6.2H13M7 2V11.5" stroke="#8dbae2" stroke-width="1.2"/></svg>
<div class="t" style="left:77.4px;top:568px;font-size:14px;line-height:22px;color:#383838;letter-spacing:0.15px">payment</div>
<svg class="a" style="left:58.0px;top:595.0px" width="14" height="12" viewBox="0 0 14 12"><rect x="0.6" y="0.6" width="12.8" height="10.8" fill="none" stroke="#3482c8" stroke-width="1.2"/><rect x="0" y="0" width="14" height="2.4" fill="#3482c8"/><path d="M1 6.2H13M7 2V11.5" stroke="#8dbae2" stroke-width="1.2"/></svg>
<div class="t" style="left:77.4px;top:590px;font-size:14px;line-height:22px;color:#383838;letter-spacing:0.15px">rental</div>
<svg class="a" style="left:58.0px;top:617.0px" width="14" height="12" viewBox="0 0 14 12"><rect x="0.6" y="0.6" width="12.8" height="10.8" fill="none" stroke="#3482c8" stroke-width="1.2"/><rect x="0" y="0" width="14" height="2.4" fill="#3482c8"/><path d="M1 6.2H13M7 2V11.5" stroke="#8dbae2" stroke-width="1.2"/></svg>
<div class="t" style="left:77.4px;top:612px;font-size:14px;line-height:22px;color:#383838;letter-spacing:0.15px">staff</div>
<svg class="a" style="left:58.0px;top:639.0px" width="14" height="12" viewBox="0 0 14 12"><rect x="0.6" y="0.6" width="12.8" height="10.8" fill="none" stroke="#3482c8" stroke-width="1.2"/><rect x="0" y="0" width="14" height="2.4" fill="#3482c8"/><path d="M1 6.2H13M7 2V11.5" stroke="#8dbae2" stroke-width="1.2"/></svg>
<div class="t" style="left:77.4px;top:634px;font-size:14px;line-height:22px;color:#383838;letter-spacing:0.15px">store</div>
<svg class="a" style="left:34.1px;top:662px" width="6" height="10" viewBox="0 0 6 10"><path d="M1 1L5 5L1 9" fill="none" stroke="#8f8f8f" stroke-width="1.5"/></svg>
<svg class="a" style="left:50.0px;top:660.5px" width="14" height="13" viewBox="0 0 14 13"><path d="M0 0.5H6L7.5 2H14V13H0Z" fill="#f07a26"/><path d="M2 7.8C4.5 4.5 9.5 4.5 12 7.8C9.5 11 4.5 11 2 7.8Z" fill="none" stroke="#fff" stroke-width="1.1"/><circle cx="7" cy="7.8" r="1.5" fill="#fff"/></svg>
<div class="t" style="left:69.3px;top:656px;font-size:14px;line-height:22px;color:#383838;letter-spacing:0.15px">Views</div>
<svg class="a" style="left:34.1px;top:684px" width="6" height="10" viewBox="0 0 6 10"><path d="M1 1L5 5L1 9" fill="none" stroke="#8f8f8f" stroke-width="1.5"/></svg>
<svg class="a" style="left:50.0px;top:682.5px" width="14" height="13" viewBox="0 0 14 13"><path d="M0 0.5H6L7.5 2H14V13H0Z" fill="#f07a26"/></svg>
<div class="t" style="left:69.3px;top:678px;font-size:14px;line-height:22px;color:#383838;letter-spacing:0.15px">Indexes</div>
<svg class="a" style="left:34.1px;top:706px" width="6" height="10" viewBox="0 0 6 10"><path d="M1 1L5 5L1 9" fill="none" stroke="#8f8f8f" stroke-width="1.5"/></svg>
<svg class="a" style="left:50.0px;top:704.5px" width="14" height="13" viewBox="0 0 14 13"><path d="M0 0.5H6L7.5 2H14V13H0Z" fill="#f07a26"/></svg>
<div class="t" style="left:69.3px;top:700px;font-size:14px;line-height:22px;color:#383838;letter-spacing:0.15px">Procedures</div>
<svg class="a" style="left:34.1px;top:728px" width="6" height="10" viewBox="0 0 6 10"><path d="M1 1L5 5L1 9" fill="none" stroke="#8f8f8f" stroke-width="1.5"/></svg>
<svg class="a" style="left:50.0px;top:726.5px" width="14" height="13" viewBox="0 0 14 13"><path d="M0 0.5H6L7.5 2H14V13H0Z" fill="#f07a26"/></svg>
<div class="t" style="left:69.3px;top:722px;font-size:14px;line-height:22px;color:#383838;letter-spacing:0.15px">Triggers</div>
<svg class="a" style="left:34.1px;top:750px" width="6" height="10" viewBox="0 0 6 10"><path d="M1 1L5 5L1 9" fill="none" stroke="#8f8f8f" stroke-width="1.5"/></svg>
<svg class="a" style="left:50.0px;top:748.5px" width="14" height="13" viewBox="0 0 14 13"><path d="M0 0.5H6L7.5 2H14V13H0Z" fill="#f07a26"/></svg>
<div class="t" style="left:69.3px;top:744px;font-size:14px;line-height:22px;color:#383838;letter-spacing:0.15px">Events</div>
<svg class="a" style="left:17.7px;top:772px" width="6" height="10" viewBox="0 0 6 10"><path d="M1 1L5 5L1 9" fill="none" stroke="#8f8f8f" stroke-width="1.5"/></svg>
<svg class="a" style="left:34.0px;top:770.5px" width="14" height="13" viewBox="0 0 14 13"><path d="M0 0.5H6L7.5 2H14V13H0Z" fill="#f07a26"/><circle cx="7" cy="5.6" r="1.6" fill="none" stroke="#fff" stroke-width="1"/><path d="M3.8 11C3.8 8.8 5.2 8 7 8C8.8 8 10.2 8.8 10.2 11Z" fill="none" stroke="#fff" stroke-width="1"/></svg>
<div class="t" style="left:53.1px;top:766px;font-size:14px;line-height:22px;color:#383838;letter-spacing:0.15px">Users</div>
<svg class="a" style="left:17.7px;top:794px" width="6" height="10" viewBox="0 0 6 10"><path d="M1 1L5 5L1 9" fill="none" stroke="#8f8f8f" stroke-width="1.5"/></svg>
<svg class="a" style="left:34.0px;top:792.5px" width="14" height="13" viewBox="0 0 14 13"><path d="M0 0.5H6L7.5 2H14V13H0Z" fill="#f07a26"/><rect x="6.2" y="3.8" width="1.6" height="1.6" fill="#fff"/><rect x="6.2" y="6.3" width="1.6" height="4.5" fill="#fff"/></svg>
<div class="t" style="left:53.1px;top:788px;font-size:14px;line-height:22px;color:#383838;letter-spacing:0.15px">System Info</div>
<svg class="a" style="left:9.5px;top:816px" width="6" height="10" viewBox="0 0 6 10"><path d="M1 1L5 5L1 9" fill="none" stroke="#8f8f8f" stroke-width="1.5"/></svg>
<svg class="a" style="left:26.0px;top:813.5px" width="14" height="15" viewBox="0 0 14 15"><path d="M2 1.5C4 0.5 6 1 7 1.5C8.5 0.5 11 0.5 12.5 2C13.5 3.5 13 6 12 8C11.5 9 11 10 11 11.5L9.5 11L9 14.5L7.5 14L7 9.5C6 10 4 10.5 3 8C2 6 1 3 2 1.5Z" fill="#336791" stroke="#fff" stroke-width=".5"/><path d="M4 3V8M7 2.5V9M10 3V8" stroke="#fff" stroke-width=".7"/></svg>
<div class="t" style="left:45.0px;top:810px;font-size:14px;line-height:22px;color:#383838;letter-spacing:0.15px">PostgreSQL Pagila Demo</div>
<svg class="a" style="left:212px;top:332px" width="16" height="10" viewBox="0 0 16 10"><path d="M0 1H16M0 5H16M0 9H16" stroke="#78a9d6" stroke-width="2"/></svg>
<div class="a" style="left:236px;top:164px;width:15px;height:666px;background:#fafafa;border-left:1px solid #e6e6e6"></div>
<div class="a" style="left:240px;top:167px;width:8px;height:635px;border-radius:4px;background:#c1c1c1"></div>
<div class="a" style="left:250px;top:136px;width:1px;height:694px;background:#e0e0e0"></div>
<!-- ===== MAIN ===== -->
<div class="a" style="left:251px;top:136px;width:1095px;height:38px;background:#efefef"></div>
<div class="a" style="left:251px;top:136px;width:106px;height:36px;background:#d9d9d9"></div>
<div class="a" style="left:253px;top:172px;width:104px;height:2px;background:#1c64a8"></div>
<svg class="a" style="left:262px;top:148px" width="14" height="12" viewBox="0 0 14 12"><rect x="0.6" y="0.6" width="12.8" height="10.8" fill="none" stroke="#3482c8" stroke-width="1.2"/><rect x="0" y="0" width="14" height="2.4" fill="#3482c8"/><path d="M1 6.2H13M7 2V11.5" stroke="#8dbae2" stroke-width="1.2"/></svg>
<div class="t" style="left:285px;top:146px;font-size:13.5px;line-height:16px;color:#222;-webkit-text-stroke:0.4px #222;letter-spacing:0.15px">address</div>
<svg class="a" style="left:345px;top:141px" width="8" height="7" viewBox="0 0 8 7"><path d="M0.5 0L7.5 7M7.5 0L0.5 7" stroke="#444" stroke-width="1"/></svg>
<svg class="a" style="left:345px;top:164px" width="9" height="2" viewBox="0 0 9 2"><circle cx="1" cy="1" r=".8" fill="#777"/><circle cx="4.5" cy="1" r=".8" fill="#777"/><circle cx="8" cy="1" r=".8" fill="#777"/></svg>
<div class="a" style="left:251px;top:174px;width:1095px;height:32px;background:#d9d9d9"></div>
<div class="a" style="left:357px;top:174px;width:69px;height:32px;background:#fff"></div>
<div class="a" style="left:357px;top:204px;width:69px;height:2px;background:#1c64a8"></div>
<svg class="a" style="left:261px;top:181px" width="16" height="16" viewBox="0 0 16 16"><rect x="0.8" y="0.8" width="14.4" height="14.4" rx="1" fill="none" stroke="#3482c8" stroke-width="1.6"/><rect x="4.5" y="3.8" width="8" height="8.4" fill="#86b2d9"/><path d="M3.5 3.5V12.5" stroke="#86b2d9" stroke-width="1"/></svg>
<div class="t" style="left:285.5px;top:181px;font-size:13.5px;line-height:16px;color:#222;letter-spacing:0.15px">Properties</div>
<svg class="a" style="left:365px;top:182px" width="16" height="14" viewBox="0 0 16 14"><rect x="0.6" y="0.6" width="14.8" height="12.8" rx="2" fill="none" stroke="#4a90d0" stroke-width="1.2"/><path d="M1 3.8H15M1 6.6H15M1 9.4H15M4 1V13" stroke="#4a90d0" stroke-width="1"/></svg>
<div class="t" style="left:390px;top:181px;font-size:13.5px;line-height:16px;color:#1a1a1a;-webkit-text-stroke:0.4px #1a1a1a;letter-spacing:0px">Data</div>
<svg class="a" style="left:434px;top:181px" width="16" height="16" viewBox="0 0 16 16"><g fill="none" stroke="#3d8ad0" stroke-width="1.1"><rect x="0.6" y="5.6" width="3.8" height="3.8"/><rect x="11.6" y="0.6" width="3.8" height="3.8"/><rect x="11.6" y="11.6" width="3.8" height="3.8"/><path d="M4.5 7.5H7.5M7.5 2.5V13.5M7.5 2.5H11.5M7.5 13.5H11.5"/></g></svg>
<div class="t" style="left:458.5px;top:181px;font-size:13.5px;line-height:16px;color:#222;letter-spacing:0.05px">Diagram</div>
<div class="a" style="left:251px;top:206px;width:1095px;height:624px;background:#d9d9d9"></div>
<div class="a" style="left:253px;top:206px;width:1093px;height:624px;background:#efefef"></div>
<div class="a" style="left:297px;top:216px;width:951px;height:24px;background:#fff;border:1px solid #d6d6d6"></div>
<div class="t" style="left:306px;top:220px;font-size:14px;line-height:16px;color:#777;letter-spacing:0.17px">Enter a SQL expression to filter results, e.g. column_name=10</div>
<div class="a" style="left:1247px;top:216px;width:26px;height:24px;background:#fff;border:1px solid #d6d6d6"></div>
<svg class="a" style="left:1252px;top:221px" width="16" height="12" viewBox="0 0 16 12"><path d="M1.5 5.8L6 9.8L14 2" fill="none" stroke="#93cf93" stroke-width="2.6"/></svg>
<svg class="a" style="left:1279px;top:219px" width="16" height="16" viewBox="0 0 16 16"><g transform="rotate(-45 8 8)"><rect x="1.2" y="4.8" width="13.6" height="6.4" rx="1.6" fill="none" stroke="#8fb8de" stroke-width="1.3"/><rect x="7.5" y="4.8" width="7.3" height="6.4" rx="1.2" fill="#8fb8de"/></g><path d="M10.5 15H15" stroke="#9fc1e2" stroke-width="1.2"/></svg>
<div class="a" style="left:261px;top:250px;width:32px;height:76px;border-radius:4px;background:#d9d9d9"></div>
<div class="t" style="left:277px;top:277px;font-size:13.5px;line-height:14px;color:#333;letter-spacing:0.2px;transform:translate(-50%,-50%) rotate(-90deg)">TABLE</div>
<svg class="a" style="left:270px;top:305px" width="14" height="15" viewBox="0 0 14 15"><rect x="0.6" y="0.6" width="12.8" height="13.8" fill="none" stroke="#4a90d0" stroke-width="1.2"/><path d="M3.8 1V14M6.8 1V14M9.8 1V14M1 11.5H13" stroke="#4a90d0" stroke-width="1"/><rect x="0" y="0" width="2.4" height="15" fill="#4a90d0"/></svg>
<div class="t" style="left:277px;top:363px;font-size:13.5px;line-height:14px;color:#333;letter-spacing:0.2px;transform:translate(-50%,-50%) rotate(-90deg)">CHARTS</div>
<svg class="a" style="left:270px;top:397px" width="14" height="14" viewBox="0 0 14 14"><path d="M7 7V0.6A6.4 6.4 0 1 1 0.6 7Z" fill="#2f7cc4"/><path d="M6 6V0.5A5.5 5.5 0 0 0 0.5 6Z" fill="#8dbae2"/></svg>
<div class="a" style="left:297px;top:250px;width:989px;height:532px;background:#fff;overflow:hidden">
<div class="a" style="left:0;top:177px;width:989px;height:25px;background:#efefef"></div>
<div class="a" style="left:0;top:27px;width:989px;height:1px;background:#dcdcdc"></div>
<div class="a" style="left:0;top:52px;width:989px;height:1px;background:#dcdcdc"></div>
<div class="a" style="left:0;top:77px;width:989px;height:1px;background:#dcdcdc"></div>
<div class="a" style="left:0;top:102px;width:989px;height:1px;background:#dcdcdc"></div>
<div class="a" style="left:0;top:127px;width:989px;height:1px;background:#dcdcdc"></div>
<div class="a" style="left:0;top:152px;width:989px;height:1px;background:#dcdcdc"></div>
<div class="a" style="left:0;top:177px;width:989px;height:1px;background:#dcdcdc"></div>
<div class="a" style="left:0;top:202px;width:989px;height:1px;background:#dcdcdc"></div>
<div class="a" style="left:0;top:227px;width:989px;height:1px;background:#dcdcdc"></div>
<div class="a" style="left:0;top:252px;width:989px;height:1px;background:#dcdcdc"></div>
<div class="a" style="left:0;top:277px;width:989px;height:1px;background:#dcdcdc"></div>
<div class="a" style="left:0;top:302px;width:989px;height:1px;background:#dcdcdc"></div>
<div class="a" style="left:0;top:327px;width:989px;height:1px;background:#dcdcdc"></div>
<div class="a" style="left:0;top:352px;width:989px;height:1px;background:#dcdcdc"></div>
<div class="a" style="left:0;top:377px;width:989px;height:1px;background:#dcdcdc"></div>
<div class="a" style="left:0;top:402px;width:989px;height:1px;background:#dcdcdc"></div>
<div class="a" style="left:0;top:427px;width:989px;height:1px;background:#dcdcdc"></div>
<div class="a" style="left:0;top:452px;width:989px;height:1px;background:#dcdcdc"></div>
<div class="a" style="left:0;top:477px;width:989px;height:1px;background:#dcdcdc"></div>
<div class="a" style="left:0;top:502px;width:989px;height:1px;background:#dcdcdc"></div>
<div class="a" style="left:0;top:527px;width:989px;height:1px;background:#dcdcdc"></div>
<div class="a" style="left:0;top:552px;width:989px;height:1px;background:#dcdcdc"></div>
<div class="a" style="left:59.0px;top:0;width:1px;height:532px;background:#dcdcdc"></div>
<div class="a" style="left:186.0px;top:0;width:1px;height:532px;background:#dcdcdc"></div>
<div class="a" style="left:440.0px;top:0;width:1px;height:532px;background:#dcdcdc"></div>
<div class="a" style="left:558.0px;top:0;width:1px;height:532px;background:#dcdcdc"></div>
<div class="a" style="left:701.0px;top:0;width:1px;height:532px;background:#dcdcdc"></div>
<div class="a" style="left:802.5px;top:0;width:1px;height:532px;background:#dcdcdc"></div>
<div class="a" style="left:938.0px;top:0;width:1px;height:532px;background:#dcdcdc"></div>
<div class="t" style="left:8px;top:7px;font-size:12.5px;line-height:14px;color:#333">#</div>
<div class="t" style="left:67.5px;top:8px;font-size:10.5px;line-height:12px;color:#3a8ad4;letter-spacing:-0.2px;-webkit-text-stroke:0.25px #3a8ad4">123</div>
<div class="t" style="left:92.2px;top:6.5px;font-size:12.3px;line-height:15px;color:#3a3a3a;letter-spacing:0.12px">address_id</div>
<svg class="a" style="left:163.7px;top:9px" width="14" height="11" viewBox="0 0 14 11"><path d="M3.5 0V8" stroke="#b8b8b8" stroke-width="2.4"/><path d="M0 6.5H7L3.5 10.8Z" fill="#b8b8b8"/><path d="M10.3 11V3" stroke="#b8b8b8" stroke-width="2.4"/><path d="M6.8 4.5H13.8L10.3 0.2Z" fill="#b8b8b8"/></svg>
<div class="t" style="left:195.5px;top:8px;font-size:10px;line-height:12px;color:#3a8ad4;letter-spacing:-0.3px;-webkit-text-stroke:0.25px #3a8ad4">A-Z</div>
<div class="t" style="left:219.2px;top:6.5px;font-size:12.3px;line-height:15px;color:#3a3a3a;letter-spacing:0.12px">address</div>
<svg class="a" style="left:417.7px;top:9px" width="14" height="11" viewBox="0 0 14 11"><path d="M3.5 0V8" stroke="#b8b8b8" stroke-width="2.4"/><path d="M0 6.5H7L3.5 10.8Z" fill="#b8b8b8"/><path d="M10.3 11V3" stroke="#b8b8b8" stroke-width="2.4"/><path d="M6.8 4.5H13.8L10.3 0.2Z" fill="#b8b8b8"/></svg>
<div class="t" style="left:449.5px;top:8px;font-size:10px;line-height:12px;color:#3a8ad4;letter-spacing:-0.3px;-webkit-text-stroke:0.25px #3a8ad4">A-Z</div>
<div class="t" style="left:473.2px;top:6.5px;font-size:12.3px;line-height:15px;color:#3a3a3a;letter-spacing:0.12px">address2</div>
<svg class="a" style="left:535.7px;top:9px" width="14" height="11" viewBox="0 0 14 11"><path d="M3.5 0V8" stroke="#b8b8b8" stroke-width="2.4"/><path d="M0 6.5H7L3.5 10.8Z" fill="#b8b8b8"/><path d="M10.3 11V3" stroke="#b8b8b8" stroke-width="2.4"/><path d="M6.8 4.5H13.8L10.3 0.2Z" fill="#b8b8b8"/></svg>
<div class="t" style="left:567.5px;top:8px;font-size:10px;line-height:12px;color:#3a8ad4;letter-spacing:-0.3px;-webkit-text-stroke:0.25px #3a8ad4">A-Z</div>
<div class="t" style="left:591.2px;top:6.5px;font-size:12.3px;line-height:15px;color:#3a3a3a;letter-spacing:0.12px">district</div>
<svg class="a" style="left:678.7px;top:9px" width="14" height="11" viewBox="0 0 14 11"><path d="M3.5 0V8" stroke="#b8b8b8" stroke-width="2.4"/><path d="M0 6.5H7L3.5 10.8Z" fill="#b8b8b8"/><path d="M10.3 11V3" stroke="#b8b8b8" stroke-width="2.4"/><path d="M6.8 4.5H13.8L10.3 0.2Z" fill="#b8b8b8"/></svg>
<div class="t" style="left:709.5px;top:8px;font-size:10.5px;line-height:12px;color:#3a8ad4;letter-spacing:-0.2px;-webkit-text-stroke:0.25px #3a8ad4">123</div>
<div class="t" style="left:734.2px;top:6.5px;font-size:12.3px;line-height:15px;color:#3a3a3a;letter-spacing:0.12px">city_id</div>
<svg class="a" style="left:780.2px;top:9px" width="14" height="11" viewBox="0 0 14 11"><path d="M3.5 0V8" stroke="#b8b8b8" stroke-width="2.4"/><path d="M0 6.5H7L3.5 10.8Z" fill="#b8b8b8"/><path d="M10.3 11V3" stroke="#b8b8b8" stroke-width="2.4"/><path d="M6.8 4.5H13.8L10.3 0.2Z" fill="#b8b8b8"/></svg>
<div class="t" style="left:812px;top:8px;font-size:10px;line-height:12px;color:#3a8ad4;letter-spacing:-0.3px;-webkit-text-stroke:0.25px #3a8ad4">A-Z</div>
<div class="t" style="left:835.7px;top:6.5px;font-size:12.3px;line-height:15px;color:#3a3a3a;letter-spacing:0.12px">postal_code</div>
<svg class="a" style="left:915.7px;top:9px" width="14" height="11" viewBox="0 0 14 11"><path d="M3.5 0V8" stroke="#b8b8b8" stroke-width="2.4"/><path d="M0 6.5H7L3.5 10.8Z" fill="#b8b8b8"/><path d="M10.3 11V3" stroke="#b8b8b8" stroke-width="2.4"/><path d="M6.8 4.5H13.8L10.3 0.2Z" fill="#b8b8b8"/></svg>
<div class="t" style="left:947.5px;top:8px;font-size:10px;line-height:12px;color:#3a8ad4;letter-spacing:-0.3px;-webkit-text-stroke:0.25px #3a8ad4">A-Z</div>
<div class="t" style="left:971.2px;top:6.5px;font-size:12.3px;line-height:15px;color:#3a3a3a;letter-spacing:0.12px">phone</div>
<div class="t" style="left:8.5px;top:32px;font-size:12px;line-height:16px;color:#333;letter-spacing:0.33px">1</div>
<div class="t" style="left:68.4px;top:32px;font-size:12px;line-height:16px;color:#333;letter-spacing:0.33px">1</div>
<div class="t" style="left:195.4px;top:32px;font-size:12px;line-height:16px;color:#333;letter-spacing:0.33px">47 MySakila Drive</div>
<div class="t" style="left:449.4px;top:32px;font-size:12px;line-height:16px;color:#888;letter-spacing:0.33px">[NULL]</div>
<div class="t" style="left:567.4px;top:32px;font-size:12px;line-height:16px;color:#333;letter-spacing:0.33px">Alberta</div>
<div class="t" style="left:710.4px;top:32px;font-size:12px;line-height:16px;color:#333;letter-spacing:0.33px">300</div>
<div class="t" style="left:8.5px;top:57px;font-size:12px;line-height:16px;color:#333;letter-spacing:0.33px">2</div>
<div class="t" style="left:68.4px;top:57px;font-size:12px;line-height:16px;color:#333;letter-spacing:0.33px">2</div>
<div class="t" style="left:195.4px;top:57px;font-size:12px;line-height:16px;color:#333;letter-spacing:0.33px">28 MySQL Boulevard</div>
<div class="t" style="left:449.4px;top:57px;font-size:12px;line-height:16px;color:#888;letter-spacing:0.33px">[NULL]</div>
<div class="t" style="left:567.4px;top:57px;font-size:12px;line-height:16px;color:#333;letter-spacing:0.33px">QLD</div>
<div class="t" style="left:710.4px;top:57px;font-size:12px;line-height:16px;color:#333;letter-spacing:0.33px">576</div>
<div class="t" style="left:8.5px;top:82px;font-size:12px;line-height:16px;color:#333;letter-spacing:0.33px">3</div>
<div class="t" style="left:68.4px;top:82px;font-size:12px;line-height:16px;color:#333;letter-spacing:0.33px">3</div>
<div class="t" style="left:195.4px;top:82px;font-size:12px;line-height:16px;color:#333;letter-spacing:0.33px">23 Workhaven Lane</div>
<div class="t" style="left:449.4px;top:82px;font-size:12px;line-height:16px;color:#888;letter-spacing:0.33px">[NULL]</div>
<div class="t" style="left:567.4px;top:82px;font-size:12px;line-height:16px;color:#333;letter-spacing:0.33px">Alberta</div>
<div class="t" style="left:710.4px;top:82px;font-size:12px;line-height:16px;color:#333;letter-spacing:0.33px">300</div>
<div class="t" style="left:947.4px;top:82px;font-size:12px;line-height:16px;color:#333;letter-spacing:0.33px">14033335568</div>
<div class="t" style="left:8.5px;top:107px;font-size:12px;line-height:16px;color:#333;letter-spacing:0.33px">4</div>
<div class="t" style="left:68.4px;top:107px;font-size:12px;line-height:16px;color:#333;letter-spacing:0.33px">4</div>
<div class="t" style="left:195.4px;top:107px;font-size:12px;line-height:16px;color:#333;letter-spacing:0.33px">1411 Lillydale Drive</div>
<div class="t" style="left:449.4px;top:107px;font-size:12px;line-height:16px;color:#888;letter-spacing:0.33px">[NULL]</div>
<div class="t" style="left:567.4px;top:107px;font-size:12px;line-height:16px;color:#333;letter-spacing:0.33px">QLD</div>
<div class="t" style="left:710.4px;top:107px;font-size:12px;line-height:16px;color:#333;letter-spacing:0.33px">576</div>
<div class="t" style="left:947.4px;top:107px;font-size:12px;line-height:16px;color:#333;letter-spacing:0.33px">6172235589</div>
<div class="t" style="left:8.5px;top:132px;font-size:12px;line-height:16px;color:#333;letter-spacing:0.33px">5</div>
<div class="t" style="left:68.4px;top:132px;font-size:12px;line-height:16px;color:#333;letter-spacing:0.33px">5</div>
<div class="t" style="left:195.4px;top:132px;font-size:12px;line-height:16px;color:#333;letter-spacing:0.33px">1913 Hanoi Way</div>
<div class="t" style="left:567.4px;top:132px;font-size:12px;line-height:16px;color:#333;letter-spacing:0.33px">Nagasaki</div>
<div class="t" style="left:710.4px;top:132px;font-size:12px;line-height:16px;color:#333;letter-spacing:0.33px">463</div>
<div class="t" style="left:811.9px;top:132px;font-size:12px;line-height:16px;color:#333;letter-spacing:0.33px">35200</div>
<div class="t" style="left:947.4px;top:132px;font-size:12px;line-height:16px;color:#333;letter-spacing:0.33px">28303384290</div>
<div class="t" style="left:8.5px;top:157px;font-size:12px;line-height:16px;color:#333;letter-spacing:0.33px">6</div>
<div class="t" style="left:68.4px;top:157px;font-size:12px;line-height:16px;color:#333;letter-spacing:0.33px">6</div>
<div class="t" style="left:195.4px;top:157px;font-size:12px;line-height:16px;color:#333;letter-spacing:0.33px">1121 Loja Avenue</div>
<div class="t" style="left:567.4px;top:157px;font-size:12px;line-height:16px;color:#333;letter-spacing:0.33px">California</div>
<div class="t" style="left:710.4px;top:157px;font-size:12px;line-height:16px;color:#333;letter-spacing:0.33px">449</div>
<div class="t" style="left:811.9px;top:157px;font-size:12px;line-height:16px;color:#333;letter-spacing:0.33px">17886</div>
<div class="t" style="left:947.4px;top:157px;font-size:12px;line-height:16px;color:#333;letter-spacing:0.33px">838635286649</div>
<div class="t" style="left:8.5px;top:182px;font-size:12px;line-height:16px;color:#333;letter-spacing:0.33px">7</div>
<div class="t" style="left:68.4px;top:182px;font-size:12px;line-height:16px;color:#333;letter-spacing:0.33px">7</div>
<div class="t" style="left:195.4px;top:182px;font-size:12px;line-height:16px;color:#333;letter-spacing:0.33px">692 Joliet Street</div>
<div class="t" style="left:567.4px;top:182px;font-size:12px;line-height:16px;color:#333;letter-spacing:0.33px">Attika</div>
<div class="t" style="left:710.4px;top:182px;font-size:12px;line-height:16px;color:#333;letter-spacing:0.33px">38</div>
<div class="t" style="left:811.9px;top:182px;font-size:12px;line-height:16px;color:#333;letter-spacing:0.33px">83579</div>
<div class="t" style="left:947.4px;top:182px;font-size:12px;line-height:16px;color:#333;letter-spacing:0.33px">448477190408</div>
<div class="t" style="left:8.5px;top:207px;font-size:12px;line-height:16px;color:#333;letter-spacing:0.33px">8</div>
<div class="t" style="left:68.4px;top:207px;font-size:12px;line-height:16px;color:#333;letter-spacing:0.33px">8</div>
<div class="t" style="left:195.4px;top:207px;font-size:12px;line-height:16px;color:#333;letter-spacing:0.33px">1566 Inegöl Manor</div>
<div class="t" style="left:567.4px;top:207px;font-size:12px;line-height:16px;color:#333;letter-spacing:0.33px">Mandalay</div>
<div class="t" style="left:710.4px;top:207px;font-size:12px;line-height:16px;color:#333;letter-spacing:0.33px">349</div>
<div class="t" style="left:811.9px;top:207px;font-size:12px;line-height:16px;color:#333;letter-spacing:0.33px">53561</div>
<div class="t" style="left:947.4px;top:207px;font-size:12px;line-height:16px;color:#333;letter-spacing:0.33px">705814003527</div>
<div class="t" style="left:8.5px;top:232px;font-size:12px;line-height:16px;color:#333;letter-spacing:0.33px">9</div>
<div class="t" style="left:68.4px;top:232px;font-size:12px;line-height:16px;color:#333;letter-spacing:0.33px">9</div>
<div class="t" style="left:195.4px;top:232px;font-size:12px;line-height:16px;color:#333;letter-spacing:0.33px">53 Idfu Parkway</div>
<div class="t" style="left:567.4px;top:232px;font-size:12px;line-height:16px;color:#333;letter-spacing:0.33px">Nantou</div>
<div class="t" style="left:710.4px;top:232px;font-size:12px;line-height:16px;color:#333;letter-spacing:0.33px">361</div>
<div class="t" style="left:811.9px;top:232px;font-size:12px;line-height:16px;color:#333;letter-spacing:0.33px">42399</div>
<div class="t" style="left:947.4px;top:232px;font-size:12px;line-height:16px;color:#333;letter-spacing:0.33px">10655648674</div>
<div class="t" style="left:8.5px;top:257px;font-size:12px;line-height:16px;color:#333;letter-spacing:0.33px">10</div>
<div class="t" style="left:68.4px;top:257px;font-size:12px;line-height:16px;color:#333;letter-spacing:0.33px">10</div>
<div class="t" style="left:195.4px;top:257px;font-size:12px;line-height:16px;color:#333;letter-spacing:0.33px">1795 Santiago de Compostela Way</div>
<div class="t" style="left:567.4px;top:257px;font-size:12px;line-height:16px;color:#333;letter-spacing:0.33px">Texas</div>
<div class="t" style="left:710.4px;top:257px;font-size:12px;line-height:16px;color:#333;letter-spacing:0.33px">295</div>
<div class="t" style="left:811.9px;top:257px;font-size:12px;line-height:16px;color:#333;letter-spacing:0.33px">18743</div>
<div class="t" style="left:947.4px;top:257px;font-size:12px;line-height:16px;color:#333;letter-spacing:0.33px">860452626434</div>
<div class="t" style="left:8.5px;top:282px;font-size:12px;line-height:16px;color:#333;letter-spacing:0.33px">11</div>
<div class="t" style="left:68.4px;top:282px;font-size:12px;line-height:16px;color:#333;letter-spacing:0.33px">11</div>
<div class="t" style="left:195.4px;top:282px;font-size:12px;line-height:16px;color:#333;letter-spacing:0.33px">900 Santiago de Compostela Parkway</div>
<div class="t" style="left:567.4px;top:282px;font-size:12px;line-height:16px;color:#333;letter-spacing:0.33px">Central Serbia</div>
<div class="t" style="left:710.4px;top:282px;font-size:12px;line-height:16px;color:#333;letter-spacing:0.33px">280</div>
<div class="t" style="left:811.9px;top:282px;font-size:12px;line-height:16px;color:#333;letter-spacing:0.33px">93896</div>
<div class="t" style="left:947.4px;top:282px;font-size:12px;line-height:16px;color:#333;letter-spacing:0.33px">716571220373</div>
<div class="t" style="left:8.5px;top:307px;font-size:12px;line-height:16px;color:#333;letter-spacing:0.33px">12</div>
<div class="t" style="left:68.4px;top:307px;font-size:12px;line-height:16px;color:#333;letter-spacing:0.33px">12</div>
<div class="t" style="left:195.4px;top:307px;font-size:12px;line-height:16px;color:#333;letter-spacing:0.33px">478 Joliet Way</div>
<div class="t" style="left:567.4px;top:307px;font-size:12px;line-height:16px;color:#333;letter-spacing:0.33px">Hamilton</div>
<div class="t" style="left:710.4px;top:307px;font-size:12px;line-height:16px;color:#333;letter-spacing:0.33px">200</div>
<div class="t" style="left:811.9px;top:307px;font-size:12px;line-height:16px;color:#333;letter-spacing:0.33px">77948</div>
<div class="t" style="left:947.4px;top:307px;font-size:12px;line-height:16px;color:#333;letter-spacing:0.33px">657282285970</div>
<div class="t" style="left:8.5px;top:332px;font-size:12px;line-height:16px;color:#333;letter-spacing:0.33px">13</div>
<div class="t" style="left:68.4px;top:332px;font-size:12px;line-height:16px;color:#333;letter-spacing:0.33px">13</div>
<div class="t" style="left:195.4px;top:332px;font-size:12px;line-height:16px;color:#333;letter-spacing:0.33px">613 Korolev Drive</div>
<div class="t" style="left:567.4px;top:332px;font-size:12px;line-height:16px;color:#333;letter-spacing:0.33px">Masqat</div>
<div class="t" style="left:710.4px;top:332px;font-size:12px;line-height:16px;color:#333;letter-spacing:0.33px">329</div>
<div class="t" style="left:811.9px;top:332px;font-size:12px;line-height:16px;color:#333;letter-spacing:0.33px">45844</div>
<div class="t" style="left:947.4px;top:332px;font-size:12px;line-height:16px;color:#333;letter-spacing:0.33px">380657522649</div>
<div class="t" style="left:8.5px;top:357px;font-size:12px;line-height:16px;color:#333;letter-spacing:0.33px">14</div>
<div class="t" style="left:68.4px;top:357px;font-size:12px;line-height:16px;color:#333;letter-spacing:0.33px">14</div>
<div class="t" style="left:195.4px;top:357px;font-size:12px;line-height:16px;color:#333;letter-spacing:0.33px">1531 Salé Drive</div>
<div class="t" style="left:567.4px;top:357px;font-size:12px;line-height:16px;color:#333;letter-spacing:0.33px">Esfahan</div>
<div class="t" style="left:710.4px;top:357px;font-size:12px;line-height:16px;color:#333;letter-spacing:0.33px">162</div>
<div class="t" style="left:811.9px;top:357px;font-size:12px;line-height:16px;color:#333;letter-spacing:0.33px">53628</div>
<div class="t" style="left:947.4px;top:357px;font-size:12px;line-height:16px;color:#333;letter-spacing:0.33px">648856936185</div>
<div class="t" style="left:8.5px;top:382px;font-size:12px;line-height:16px;color:#333;letter-spacing:0.33px">15</div>
<div class="t" style="left:68.4px;top:382px;font-size:12px;line-height:16px;color:#333;letter-spacing:0.33px">15</div>
<div class="t" style="left:195.4px;top:382px;font-size:12px;line-height:16px;color:#333;letter-spacing:0.33px">1542 Tarlac Parkway</div>
<div class="t" style="left:567.4px;top:382px;font-size:12px;line-height:16px;color:#333;letter-spacing:0.33px">Kanagawa</div>
<div class="t" style="left:710.4px;top:382px;font-size:12px;line-height:16px;color:#333;letter-spacing:0.33px">440</div>
<div class="t" style="left:811.9px;top:382px;font-size:12px;line-height:16px;color:#333;letter-spacing:0.33px">1027</div>
<div class="t" style="left:947.4px;top:382px;font-size:12px;line-height:16px;color:#333;letter-spacing:0.33px">635297277345</div>
<div class="t" style="left:8.5px;top:407px;font-size:12px;line-height:16px;color:#333;letter-spacing:0.33px">16</div>
<div class="t" style="left:68.4px;top:407px;font-size:12px;line-height:16px;color:#333;letter-spacing:0.33px">16</div>
<div class="t" style="left:195.4px;top:407px;font-size:12px;line-height:16px;color:#333;letter-spacing:0.33px">808 Bhopal Manor</div>
<div class="t" style="left:567.4px;top:407px;font-size:12px;line-height:16px;color:#333;letter-spacing:0.33px">Haryana</div>
<div class="t" style="left:710.4px;top:407px;font-size:12px;line-height:16px;color:#333;letter-spacing:0.33px">582</div>
<div class="t" style="left:811.9px;top:407px;font-size:12px;line-height:16px;color:#333;letter-spacing:0.33px">10672</div>
<div class="t" style="left:947.4px;top:407px;font-size:12px;line-height:16px;color:#333;letter-spacing:0.33px">465887807014</div>
<div class="t" style="left:8.5px;top:432px;font-size:12px;line-height:16px;color:#333;letter-spacing:0.33px">17</div>
<div class="t" style="left:68.4px;top:432px;font-size:12px;line-height:16px;color:#333;letter-spacing:0.33px">17</div>
<div class="t" style="left:195.4px;top:432px;font-size:12px;line-height:16px;color:#333;letter-spacing:0.33px">270 Amroha Parkway</div>
<div class="t" style="left:567.4px;top:432px;font-size:12px;line-height:16px;color:#333;letter-spacing:0.33px">Osmaniye</div>
<div class="t" style="left:710.4px;top:432px;font-size:12px;line-height:16px;color:#333;letter-spacing:0.33px">384</div>
<div class="t" style="left:811.9px;top:432px;font-size:12px;line-height:16px;color:#333;letter-spacing:0.33px">29610</div>
<div class="t" style="left:947.4px;top:432px;font-size:12px;line-height:16px;color:#333;letter-spacing:0.33px">695479687538</div>
<div class="t" style="left:8.5px;top:457px;font-size:12px;line-height:16px;color:#333;letter-spacing:0.33px">18</div>
<div class="t" style="left:68.4px;top:457px;font-size:12px;line-height:16px;color:#333;letter-spacing:0.33px">18</div>
<div class="t" style="left:195.4px;top:457px;font-size:12px;line-height:16px;color:#333;letter-spacing:0.33px">770 Bydgoszcz Avenue</div>
<div class="t" style="left:567.4px;top:457px;font-size:12px;line-height:16px;color:#333;letter-spacing:0.33px">California</div>
<div class="t" style="left:710.4px;top:457px;font-size:12px;line-height:16px;color:#333;letter-spacing:0.33px">120</div>
<div class="t" style="left:811.9px;top:457px;font-size:12px;line-height:16px;color:#333;letter-spacing:0.33px">16266</div>
<div class="t" style="left:947.4px;top:457px;font-size:12px;line-height:16px;color:#333;letter-spacing:0.33px">517338314235</div>
<div class="t" style="left:8.5px;top:482px;font-size:12px;line-height:16px;color:#333;letter-spacing:0.33px">19</div>
<div class="t" style="left:68.4px;top:482px;font-size:12px;line-height:16px;color:#333;letter-spacing:0.33px">19</div>
<div class="t" style="left:195.4px;top:482px;font-size:12px;line-height:16px;color:#333;letter-spacing:0.33px">419 Iligan Lane</div>
<div class="t" style="left:567.4px;top:482px;font-size:12px;line-height:16px;color:#333;letter-spacing:0.33px">Madhya Pradesh</div>
<div class="t" style="left:710.4px;top:482px;font-size:12px;line-height:16px;color:#333;letter-spacing:0.33px">76</div>
<div class="t" style="left:811.9px;top:482px;font-size:12px;line-height:16px;color:#333;letter-spacing:0.33px">72878</div>
<div class="t" style="left:947.4px;top:482px;font-size:12px;line-height:16px;color:#333;letter-spacing:0.33px">990911107354</div>
<div class="t" style="left:8.5px;top:507px;font-size:12px;line-height:16px;color:#333;letter-spacing:0.33px">20</div>
<div class="t" style="left:68.4px;top:507px;font-size:12px;line-height:16px;color:#333;letter-spacing:0.33px">20</div>
<div class="t" style="left:195.4px;top:507px;font-size:12px;line-height:16px;color:#333;letter-spacing:0.33px">360 Toulouse Parkway</div>
<div class="t" style="left:567.4px;top:507px;font-size:12px;line-height:16px;color:#333;letter-spacing:0.33px">England</div>
<div class="t" style="left:710.4px;top:507px;font-size:12px;line-height:16px;color:#333;letter-spacing:0.33px">495</div>
<div class="t" style="left:811.9px;top:507px;font-size:12px;line-height:16px;color:#333;letter-spacing:0.33px">54308</div>
<div class="t" style="left:947.4px;top:507px;font-size:12px;line-height:16px;color:#333;letter-spacing:0.33px">949312333307</div>
<div class="a" style="left:0;top:177px;width:2px;height:26px;background:#1a5fa0"></div>
<div class="a" style="left:186.0px;top:177.5px;width:254px;height:25px;border:1.5px solid #1f78d1"></div>
<svg class="a" style="left:416px;top:185px" width="16" height="10" viewBox="0 0 16 10"><path d="M0 0.8H16M0 4.8H16M0 8.8H16" stroke="#9a9a9a" stroke-width="1.5"/></svg>
</div>
<div class="a" style="left:1286px;top:250px;width:14px;height:546px;background:#f8f8f8"></div>
<div class="a" style="left:1290px;top:253px;width:8px;height:50px;border-radius:4px;background:#c1c1c1"></div>
<div class="a" style="left:297px;top:782px;width:1003px;height:14px;background:#f8f8f8"></div>
<div class="a" style="left:300px;top:786px;width:694px;height:8px;border-radius:4px;background:#c1c1c1"></div>
<div class="t" style="left:1321px;top:277px;font-size:13.5px;line-height:14px;color:#333;letter-spacing:0.2px;transform:translate(-50%,-50%) rotate(-90deg)">VALUE</div>
<svg class="a" style="left:1313px;top:305px" width="16" height="15" viewBox="0 0 16 15"><rect x="0.5" y="0.5" width="15" height="14" rx="1.5" fill="#3a87cf"/><rect x="7.5" y="3" width="6" height="9.5" fill="#fff"/><path d="M9 1.5H14.5V3" stroke="#fff" stroke-width="1" fill="none"/></svg>
<div class="t" style="left:1321px;top:372px;font-size:13.5px;line-height:14px;color:#333;letter-spacing:0px;transform:translate(-50%,-50%) rotate(-90deg)">GROUPING</div>
<svg class="a" style="left:1313px;top:415px" width="15" height="15" viewBox="0 0 15 15"><circle cx="7.5" cy="7.5" r="6.6" fill="none" stroke="#3a87cf" stroke-width="1.4"/><circle cx="5" cy="5.3" r="1.2" fill="#3a87cf"/><circle cx="10" cy="5.3" r="1.2" fill="#3a87cf"/><circle cx="5" cy="9.8" r="1.2" fill="#3a87cf"/><circle cx="10" cy="9.8" r="1.2" fill="#3a87cf"/></svg>
<svg class="a" style="left:267px;top:806px" width="16" height="16" viewBox="0 0 16 16"><path d="M10.4 14.1A6.8 6.8 0 1 1 14.7 8.5" fill="none" stroke="#2f7cc4" stroke-width="1.7"/><path d="M12 9V13.6L16.2 12.8Z" fill="#2f7cc4"/></svg>
<svg class="a" style="left:291px;top:811px" width="8" height="5" viewBox="0 0 8 5"><path d="M0.8 0.8L4 4L7.2 0.8" fill="none" stroke="#555" stroke-width="1.7"/></svg>
<div class="a" style="left:306px;top:801px;width:78px;height:24px;background:#fff;border:1.5px solid #d0d0d0;border-radius:3px"></div>
<div class="t" style="left:314px;top:805.5px;font-size:13.5px;line-height:16px;color:#333;letter-spacing:0.2px">200</div>
<svg class="a" style="left:393px;top:806px" width="16" height="15" viewBox="0 0 16 15"><path d="M1 8V14H15V8" fill="none" stroke="#2f7cc4" stroke-width="1.6"/><path d="M1 1.5C4 1.5 6 3 8 6.5C10 3 12 1.5 15 1.5" fill="none" stroke="#2f7cc4" stroke-width="1.6"/><path d="M5.5 5.5L8 9L10.5 5.5Z" fill="#2f7cc4"/></svg>
<div class="t" style="left:413px;top:806px;font-size:12px;line-height:14px;color:#555;font-weight:bold">200+</div>
<svg class="a" style="left:453px;top:807px" width="16" height="14" viewBox="0 0 16 14"><path d="M0 1H12M0 5H12M0 9H7" stroke="#2f7cc4" stroke-width="1.6"/><path d="M11.5 7V14M8 10.5H15" stroke="#3cb521" stroke-width="1.8"/></svg>
<svg class="a" style="left:481px;top:807px" width="16" height="14" viewBox="0 0 16 14"><path d="M0 1H12M0 5H6M0 9H4" stroke="#2f7cc4" stroke-width="1.6"/><path d="M8 6C6.5 8 6.5 11 8 13M14 6C15.5 8 15.5 11 14 13" fill="none" stroke="#2f7cc4" stroke-width="1"/><path d="M11 7.5V11.5M9 9.5H13" stroke="#3cb521" stroke-width="1.3"/></svg>
<svg class="a" style="left:508px;top:807px" width="16" height="14" viewBox="0 0 16 14"><path d="M0 1H12M0 5H8M0 9H5" stroke="#2f7cc4" stroke-width="1.6"/><path d="M8 10.5H15.5" stroke="#e04040" stroke-width="1.8"/></svg>
<svg class="a" style="left:537px;top:806px" width="15" height="16" viewBox="0 0 15 16"><rect x="4" y="1" width="10" height="9" fill="none" stroke="#8ab6de" stroke-width="1" stroke-dasharray="1.5 1"/><rect x="1" y="5" width="8" height="10" fill="#fff" stroke="#8ab6de" stroke-width="1.3"/><path d="M3 11L5 9L7 11" fill="none" stroke="#8ab6de"/></svg>
<svg class="a" style="left:565px;top:806px" width="14" height="14" viewBox="0 0 14 14"><path d="M3.5 11H2.5A2.5 2.5 0 0 1 2.5 6A4.5 4.5 0 0 1 11 4.8A3 3 0 0 1 11.5 11H10.5" fill="none" stroke="#a6d6a0" stroke-width="1.3"/><path d="M7 6V13.5M4.5 8.5L7 6L9.5 8.5" fill="none" stroke="#a6d6a0" stroke-width="1.3"/></svg>
<div class="t" style="left:584px;top:807px;font-size:11px;line-height:13px;color:#aaa;font-weight:bold">SAVE</div>
<svg class="a" style="left:626px;top:805px" width="16" height="16" viewBox="0 0 16 16"><rect x="4" y="0.8" width="9" height="8" fill="none" stroke="#8ab6de" stroke-width="1" stroke-dasharray="1.5 1"/><path d="M8 4.5H1V15H8" fill="none" stroke="#8ab6de" stroke-width="1.3"/><path d="M9.5 10L14.5 15M14.5 10L9.5 15" stroke="#e88080" stroke-width="1.4"/></svg>
<div class="t" style="left:645.5px;top:807px;font-size:11px;line-height:13px;color:#aaa;font-weight:bold">CANCEL</div>
<svg class="a" style="left:704px;top:805px" width="15" height="16" viewBox="0 0 15 16"><path d="M3 1H10V7M3 1V13M1 13H7" fill="none" stroke="#8ab6de" stroke-width="1.3"/><circle cx="10.5" cy="11" r="2.8" fill="none" stroke="#8ab6de" stroke-width="1.3"/><path d="M12.5 13L14.5 15" stroke="#8ab6de" stroke-width="1.3"/></svg>
<div class="t" style="left:723.5px;top:807px;font-size:11px;line-height:13px;color:#aaa;font-weight:bold">SCRIPT</div>
<svg class="a" style="left:778px;top:807px" width="13" height="14" viewBox="0 0 13 14"><path d="M1 1H12" stroke="#2f7cc4" stroke-width="1.5"/><path d="M6.5 4V13.5" stroke="#2f7cc4" stroke-width="1.5"/><path d="M3 7L6.5 3.5L10 7Z" fill="#2f7cc4"/></svg>
<div class="t" style="left:797px;top:807px;font-size:11px;line-height:13px;color:#555;font-weight:bold">EXPORT</div>
<svg class="a" style="left:854px;top:807px" width="16" height="13" viewBox="0 0 16 13"><rect x="0.7" y="0.7" width="14.6" height="11.6" rx="1" fill="none" stroke="#2f7cc4" stroke-width="1.4"/><path d="M1 4H15M8 1V12M9.5 8H14" stroke="#2f7cc4" stroke-width="1.2"/><path d="M2.5 8H6M4.5 6.3L6.3 8L4.5 9.7" fill="none" stroke="#2f7cc4" stroke-width="1"/></svg>
<div class="t" style="left:874px;top:807px;font-size:11px;line-height:13px;color:#555;font-weight:bold">IMPORT</div>
<div class="t" style="left:1175.5px;top:806px;font-size:13px;line-height:15px;color:#555;letter-spacing:-0.05px">200 row(s) fetched - 131ms</div>
</div>
</body></html>
